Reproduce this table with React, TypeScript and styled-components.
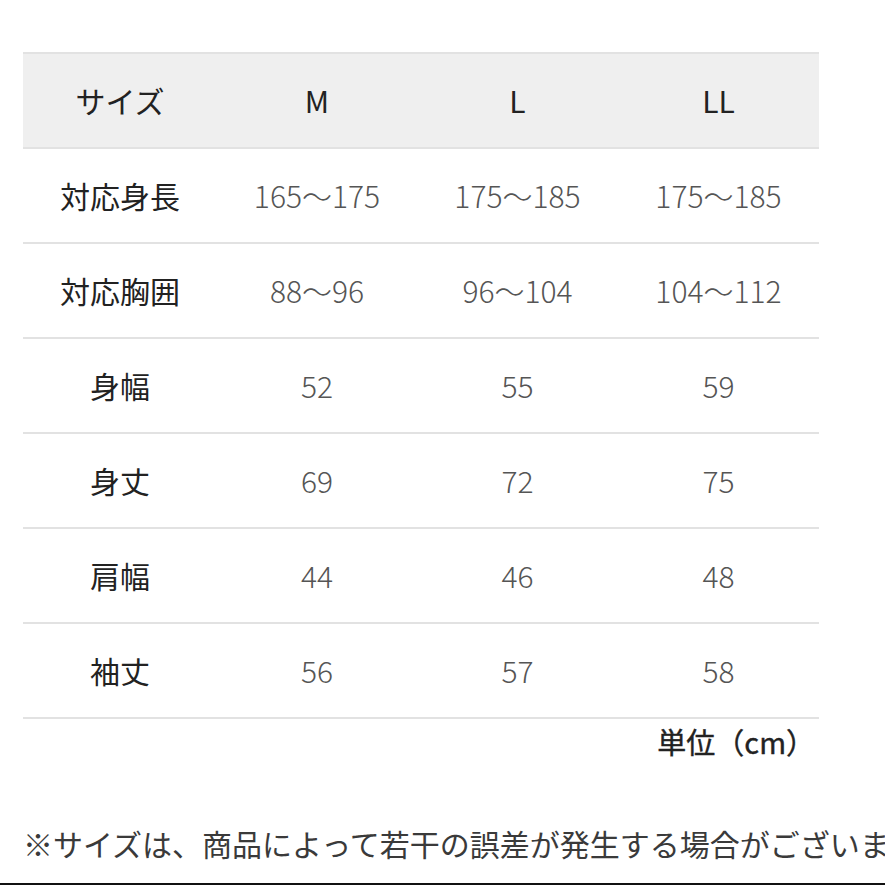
import React from "react";
import styled, { createGlobalStyle } from "styled-components";

const Global = createGlobalStyle`
  html, body { margin: 0; padding: 0; background: #fff; }
  body { font-family: "Noto Sans CJK JP", "Noto Sans", sans-serif; color: #333; overflow: hidden; }
`;

const Page = styled.div`
  width: 885px;
  height: 885px;
  box-sizing: border-box;
  padding: 52px 0 0 23px;
  display: flex;
  flex-direction: column;
  position: relative;
  overflow: hidden;
`;

const Table = styled.div`
  width: 796px;
  display: flex;
  flex-direction: column;
  border-top: 2px solid #e2e2e2;
`;

const Row = styled.div<{ $head?: boolean }>`
  display: grid;
  grid-template-columns: 194px 200px 201px 201px;
  height: 95px;
  box-sizing: border-box;
  border-bottom: 2px solid #e2e2e2;
  background: ${(p) => (p.$head ? "#efefef" : "#fff")};
`;

const Cell = styled.div<{ $label?: boolean; $head?: boolean }>`
  display: flex;
  align-items: center;
  justify-content: center;
  padding-bottom: 2px;
  font-size: 30px;
  font-weight: ${(p) => (p.$head || p.$label ? 400 : 300)};
  color: ${(p) => (p.$head || p.$label ? "#222" : "#555")};
  white-space: nowrap;
`;

const Unit = styled.div`
  width: 796px;
  box-sizing: border-box;
  padding-right: 4px;
  text-align: right;
  font-size: 29px;
  font-weight: 400;
  color: #222;
  margin-top: 2px;
  line-height: 40px;
  -webkit-text-stroke: 0.4px #222;
`;

const Note = styled.div`
  margin-top: 62px;
  font-size: 30px;
  font-weight: 400;
  color: #3a3a3a;
  white-space: nowrap;
  line-height: 40px;
`;

const BottomRule = styled.div`
  position: absolute;
  left: 0;
  right: 0;
  top: 883px;
  height: 2px;
  background: #111;
`;

const sizes = ["M", "L", "LL"];
const rows: [string, string, string, string][] = [
  ["対応身長", "165～175", "175～185", "175～185"],
  ["対応胸囲", "88～96", "96～104", "104～112"],
  ["身幅", "52", "55", "59"],
  ["身丈", "69", "72", "75"],
  ["肩幅", "44", "46", "48"],
  ["袖丈", "56", "57", "58"],
];

export default function App() {
  return (
    <>
      <Global />
      <Page>
        <Table>
          <Row $head>
            <Cell $head>サイズ</Cell>
            {sizes.map((s) => (
              <Cell $head key={s}>
                {s}
              </Cell>
            ))}
          </Row>
          {rows.map((r) => (
            <Row key={r[0]}>
              <Cell $label>{r[0]}</Cell>
              <Cell>{r[1]}</Cell>
              <Cell>{r[2]}</Cell>
              <Cell>{r[3]}</Cell>
            </Row>
          ))}
        </Table>
        <Unit>単位（cm）</Unit>
        <Note>※サイズは、商品によって若干の誤差が発生する場合がございます。</Note>
        <BottomRule />
      </Page>
    </>
  );
}
